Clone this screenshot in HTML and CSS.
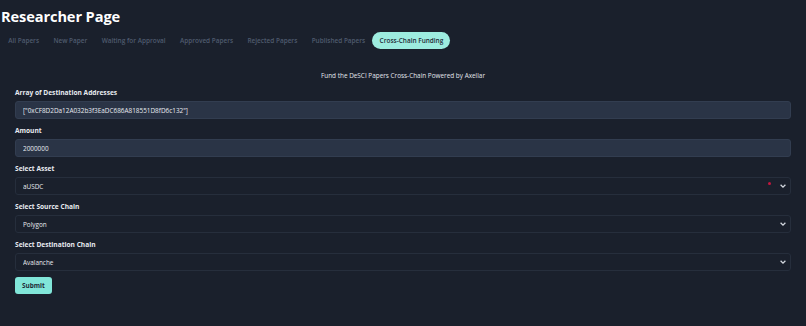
FILE: index.html
```html
<!DOCTYPE html>
<html lang="en">
<head>
  <meta charset="UTF-8">
  <title>Researcher Page</title>
  <link rel="stylesheet" href="styles.css">
</head>
<body>
  <h1>Researcher Page</h1>

  <div class="tabs">
    <button class="tab">All Papers</button>
    <button class="tab">New Paper</button>
    <button class="tab">Waiting for Approval</button>
    <button class="tab">Approved Papers</button>
    <button class="tab">Rejected Papers</button>
    <button class="tab">Published Papers</button>
    <button class="tab active">Cross-Chain Funding</button>
  </div>

  <form class="fund-form">
    <p class="intro">Fund the DeSCI Papers Cross-Chain Powered by Axellar</p>

    <div class="field">
      <label>Array of Destination Addresses</label>
      <input type="text" class="filled" value='["0xCF8D2Da12A032b3f3EaDC686A818551D8fD6c132"]' />
    </div>

    <div class="field">
      <label>Amount</label>
      <input type="text" class="filled" value="2000000" />
    </div>

    <div class="field">
      <label>Select Asset</label>
      <div class="select-wrap">
        <select>
          <option>aUSDC</option>
        </select>
        <span class="dot"></span>
        <svg class="chevron" viewBox="0 0 10 10"><path d="M2 3.5 L5 6.5 L8 3.5" /></svg>
      </div>
    </div>

    <div class="field">
      <label>Select Source Chain</label>
      <div class="select-wrap">
        <select>
          <option>Polygon</option>
        </select>
        <svg class="chevron" viewBox="0 0 10 10"><path d="M2 3.5 L5 6.5 L8 3.5" /></svg>
      </div>
    </div>

    <div class="field">
      <label>Select Destination Chain</label>
      <div class="select-wrap">
        <select>
          <option>Avalanche</option>
        </select>
        <svg class="chevron" viewBox="0 0 10 10"><path d="M2 3.5 L5 6.5 L8 3.5" /></svg>
      </div>
    </div>

    <button type="button" class="submit">Submit</button>
  </form>
</body>
</html>
```

FILE: styles.css
```css
body {
  margin: 0;
  padding: 0 0 0 1px;
  background-color: #1a202c;
  color: #e8ebf0;
  font-family: 'Open Sans', sans-serif;
}

h1 {
  margin: 6px 0 0;
  font-size: 14.6px;
  line-height: 20px;
  font-weight: 700;
  color: #ffffff;
  letter-spacing: -0.1px;
}

.tabs {
  display: flex;
  margin-top: 6px;
}

.tab {
  height: 17px;
  padding: 0 7.2px;
  border: none;
  border-radius: 9px;
  background: transparent;
  color: #4f5b6e;
  font-family: inherit;
  font-size: 6.45px;
  font-weight: 600;
  cursor: pointer;
}

.tab.active {
  background-color: #9decdf;
  color: #1d2a36;
}

.fund-form {
  margin: 22px 0 0 14px;
  width: 776px;
}

.intro {
  margin: 0 0 6px;
  text-align: center;
  font-size: 6.4px;
  line-height: 10px;
  color: #e2e6ec;
}

.field {
  margin-bottom: 6px;
}

.field label {
  display: block;
  height: 12px;
  line-height: 12px;
  margin-bottom: 2px;
  font-size: 6.6px;
  font-weight: 700;
  color: #e8ebf0;
}

input, select {
  display: block;
  box-sizing: border-box;
  width: 100%;
  height: 18px;
  padding: 0 7px;
  border-radius: 3px;
  font-family: inherit;
  font-size: 6.4px;
  color: #e8ebf0;
  outline: none;
}

input.filled {
  background-color: #2a3446;
  border: 1px solid #323d50;
}

.select-wrap {
  position: relative;
}

select {
  appearance: none;
  background-color: #1a202c;
  border: 1px solid #262e3c;
}

.chevron {
  position: absolute;
  right: 4px;
  top: 5px;
  width: 8px;
  height: 8px;
  fill: none;
  stroke: #d5d9e0;
  stroke-width: 1.6;
}

.dot {
  position: absolute;
  right: 20px;
  top: 5px;
  width: 3px;
  height: 3px;
  border-radius: 50%;
  background-color: #c3173e;
}

.submit {
  display: block;
  margin-top: 2px;
  height: 17px;
  padding: 0 7px;
  border: none;
  border-radius: 3px;
  background-color: #81e6d9;
  color: #1d2a36;
  font-family: inherit;
  font-size: 6.4px;
  font-weight: 700;
  cursor: pointer;
}
```
